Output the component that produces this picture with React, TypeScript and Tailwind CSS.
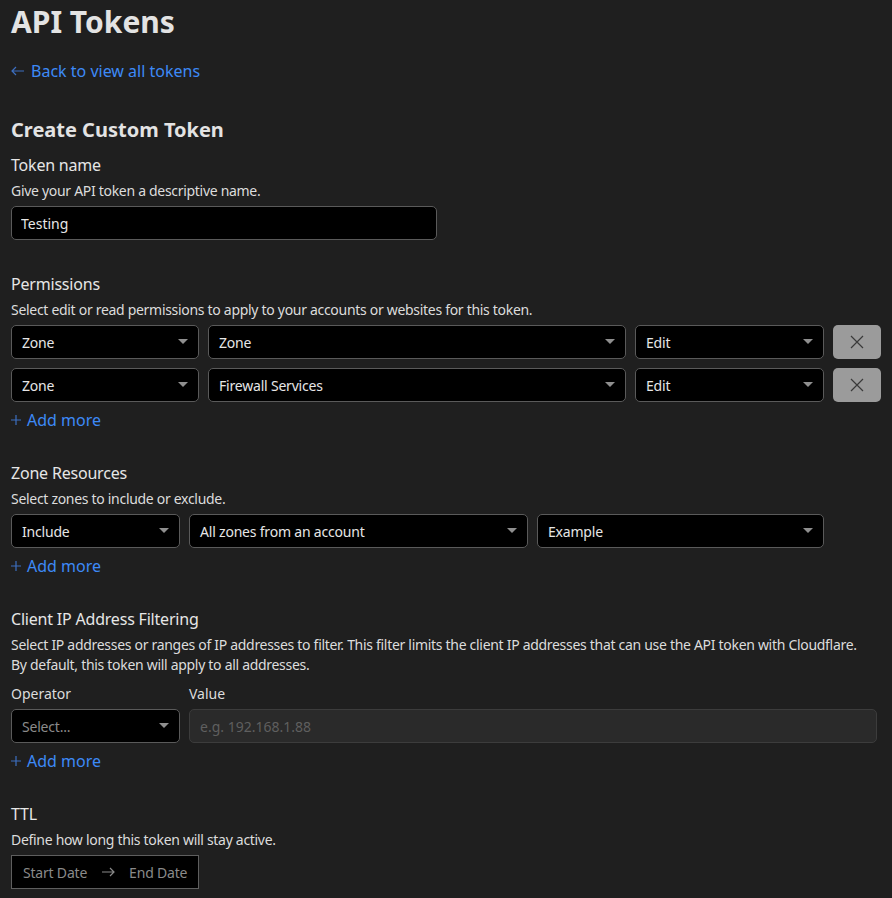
import { useState } from "react";

const font = { fontFamily: '"Noto Sans", "Open Sans", sans-serif' };

function Caret() {
  return (
    <svg width="10" height="6" viewBox="0 0 10 6" className="shrink-0">
      <path d="M0 0 L10 0 L5 5 Z" fill="#8f8f8f" />
    </svg>
  );
}

function Select({ value, className = "", placeholder = false }: { value: string; className?: string; placeholder?: boolean }) {
  return (
    <div
      className={`h-[34px] flex items-center justify-between pl-[10px] pr-[10px] bg-black border border-[#5a5a5a] rounded-[5px] text-[14px] tracking-[-0.2px] ${
        placeholder ? "text-[#8a8a8a]" : "text-[#e6e6e6]"
      } ${className}`}
    >
      <span>{value}</span>
      <Caret />
    </div>
  );
}

function RemoveButton() {
  return (
    <button className="w-[48px] h-[34px] rounded-[5px] bg-[#9b9b9b] flex items-center justify-center shrink-0">
      <svg width="14" height="14" viewBox="0 0 14 14">
        <path d="M1 1 L13 13 M13 1 L1 13" stroke="#3a3a3a" strokeWidth="1.2" />
      </svg>
    </button>
  );
}

function AddMore() {
  return (
    <a className="flex items-center gap-[6px] text-[16px] text-[#3d8af7] leading-[20px] cursor-pointer">
      <svg width="10" height="10" viewBox="0 0 10 10">
        <path d="M5 0 V10 M0 5 H10" stroke="#3d6fc0" strokeWidth="1.2" />
      </svg>
      <span>Add more</span>
    </a>
  );
}

function SectionHead({ title, desc }: { title: string; desc: React.ReactNode }) {
  return (
    <>
      <h3 className="text-[16px] text-[#e6e6e6] leading-[20px] tracking-[-0.2px]">{title}</h3>
      <p className="text-[14px] text-[#dcdcdc] leading-[20px] mt-[6px] tracking-[-0.3px]">{desc}</p>
    </>
  );
}

export default function App() {
  const [name, setName] = useState("Testing");

  return (
    <div className="min-h-[898px] bg-[#1f1f1f] px-[11px] text-[#e6e6e6]" style={font}>
      <h1 className="text-[30px] font-bold text-[#e3e3e3] leading-[40px] pt-[2px]">API Tokens</h1>
      <a className="flex items-center gap-[6px] mt-[17px] text-[16px] text-[#3d8af7] leading-[24px] cursor-pointer">
        <svg width="14" height="10" viewBox="0 0 14 10">
          <path d="M13 5 H1 M5 1 L1 5 L5 9" stroke="#3d6fc0" strokeWidth="1.2" fill="none" />
        </svg>
        <span>Back to view all tokens</span>
      </a>

      <h2 className="mt-[33px] text-[20px] font-bold text-[#e3e3e3] leading-[28px]">Create Custom Token</h2>

      <div className="mt-[11px]">
        <SectionHead title="Token name" desc="Give your API token a descriptive name." />
        <input
          value={name}
          onChange={(e) => setName(e.target.value)}
          className="mt-[5px] w-[426px] h-[34px] bg-black border border-[#5a5a5a] rounded-[5px] px-[9px] text-[14px] text-[#e6e6e6] outline-none"
        />
      </div>

      <div className="mt-[34px]">
        <SectionHead title="Permissions" desc="Select edit or read permissions to apply to your accounts or websites for this token." />
        <div className="mt-[5px] flex flex-col gap-[9px]">
          <div className="flex gap-[9px]">
            <Select value="Zone" className="w-[188px]" />
            <Select value="Zone" className="w-[418px]" />
            <Select value="Edit" className="w-[189px]" />
            <RemoveButton />
          </div>
          <div className="flex gap-[9px]">
            <Select value="Zone" className="w-[188px]" />
            <Select value="Firewall Services" className="w-[418px]" />
            <Select value="Edit" className="w-[189px]" />
            <RemoveButton />
          </div>
        </div>
        <div className="mt-[8px]">
          <AddMore />
        </div>
      </div>

      <div className="mt-[33px]">
        <SectionHead title="Zone Resources" desc="Select zones to include or exclude." />
        <div className="mt-[5px] flex gap-[9px]">
          <Select value="Include" className="w-[169px]" />
          <Select value="All zones from an account" className="w-[339px]" />
          <Select value="Example" className="w-[287px]" />
        </div>
        <div className="mt-[8px]">
          <AddMore />
        </div>
      </div>

      <div className="mt-[33px]">
        <SectionHead
          title="Client IP Address Filtering"
          desc={
            <>
              <span className="whitespace-nowrap">
                Select IP addresses or ranges of IP addresses to filter. This filter limits the client IP addresses that can use the API token with Cloudflare.
              </span>
              <br />
              By default, this token will apply to all addresses.
            </>
          }
        />
        <div className="mt-[9px] flex gap-[9px]">
          <div className="w-[169px] shrink-0">
            <div className="text-[14px] text-[#dcdcdc] leading-[20px]">Operator</div>
            <Select value="Select..." placeholder className="mt-[5px]" />
          </div>
          <div className="w-[688px]">
            <div className="text-[14px] text-[#dcdcdc] leading-[20px]">Value</div>
            <input
              placeholder="e.g. 192.168.1.88"
              disabled
              className="mt-[5px] w-full h-[34px] bg-[#2a2a2a] border border-[#3c3c3c] rounded-[5px] px-[10px] text-[14px] placeholder:text-[#5f5f5f] outline-none"
            />
          </div>
        </div>
        <div className="mt-[8px]">
          <AddMore />
        </div>
      </div>

      <div className="mt-[33px]">
        <SectionHead title="TTL" desc="Define how long this token will stay active." />
        <div className="mt-[5px] w-[188px] h-[34px] bg-black border border-[#5e5e5e] flex items-center pl-[11px] text-[14px] text-[#8a8a8a] tracking-[-0.2px]">
          <span>Start Date</span>
          <svg width="14" height="10" viewBox="0 0 14 10" className="mx-[14px]">
            <path d="M1 5 H13 M9 1 L13 5 L9 9" stroke="#8a8a8a" strokeWidth="1.2" fill="none" />
          </svg>
          <span>End Date</span>
        </div>
      </div>
    </div>
  );
}
